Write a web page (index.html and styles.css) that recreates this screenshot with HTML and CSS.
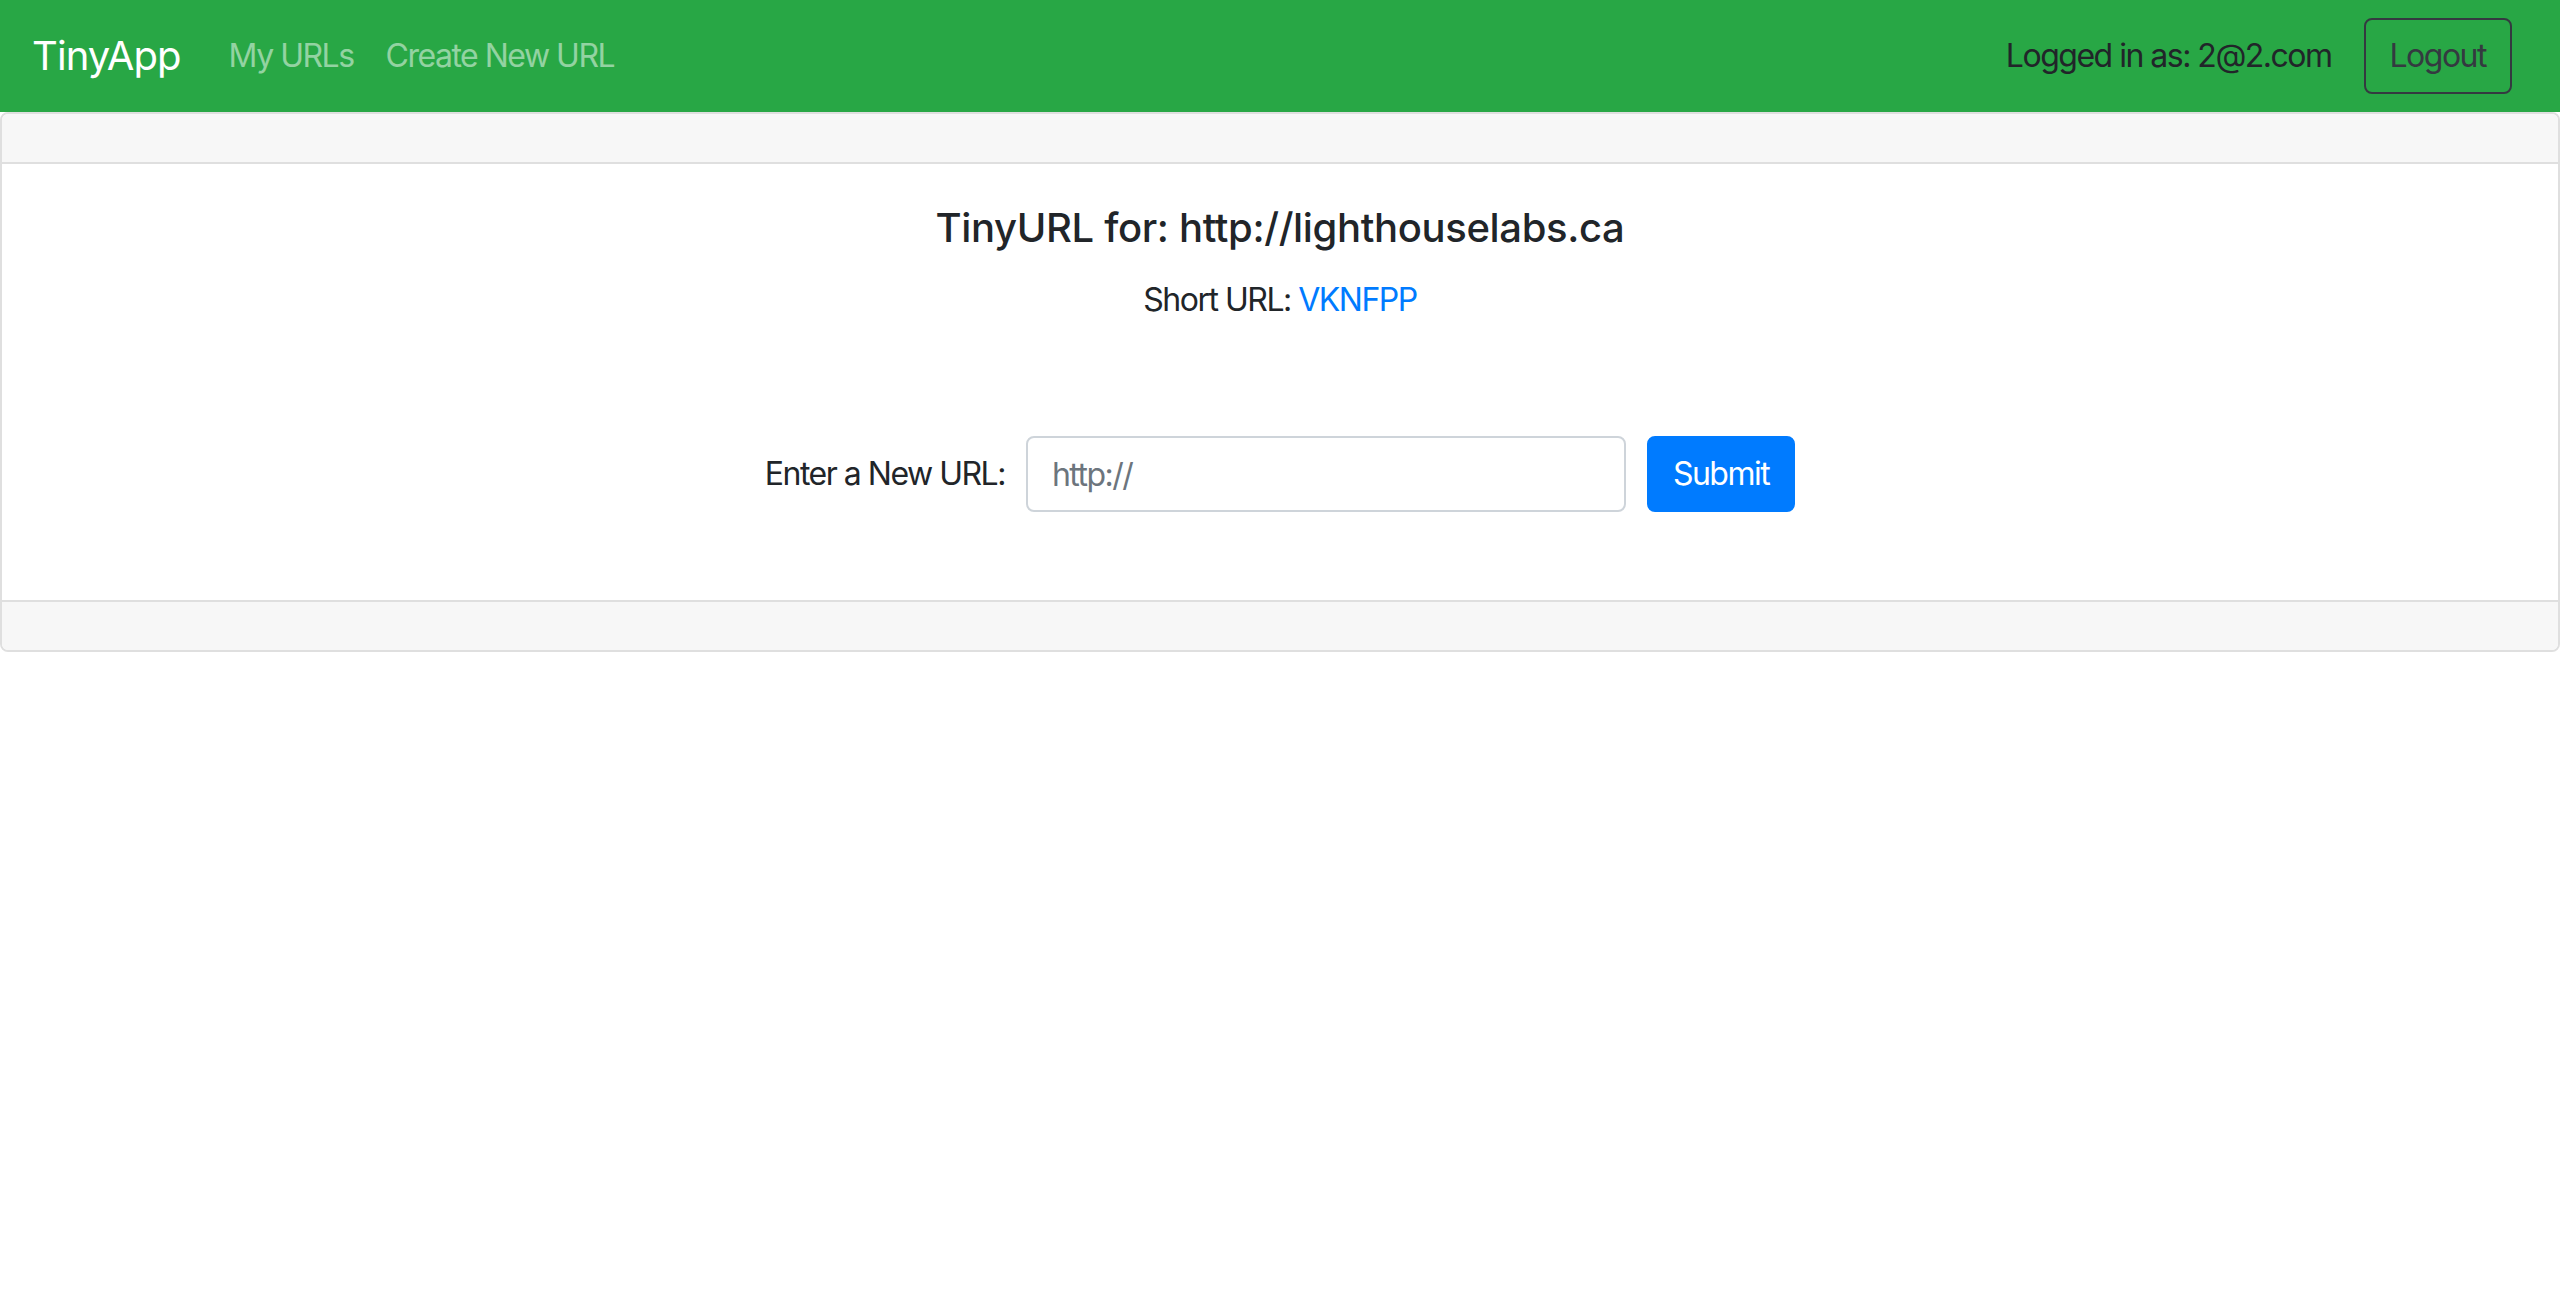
FILE: index.html
```html
<!DOCTYPE html>
<html lang="en">
<head>
<meta charset="utf-8">
<title>TinyApp</title>
<link rel="stylesheet" href="styles.css">
</head>
<body>
<nav class="navbar">
  <a class="brand" href="#">TinyApp</a>
  <div class="nav-links">
    <a class="nav-link" href="#">My URLs</a>
    <a class="nav-link" href="#">Create New URL</a>
  </div>
  <div class="nav-right">
    <span class="user">Logged in as: 2@2.com</span>
    <button class="btn-logout" type="button">Logout</button>
  </div>
</nav>
<div class="card">
  <div class="card-header"></div>
  <div class="card-body">
    <h5 class="card-title">TinyURL for: http://lighthouselabs.ca</h5>
    <p class="card-text">Short URL: <a class="short" href="#">VKNFPP</a></p>
    <form class="url-form">
      <label class="form-label" for="longURL">Enter a New URL:</label>
      <input class="form-input" id="longURL" type="text" placeholder="http://">
      <button class="btn-submit" type="button">Submit</button>
    </form>
  </div>
  <div class="card-footer"></div>
</div>
</body>
</html>
```
FILE: styles.css
```css
* { box-sizing: border-box; }
html, body { margin: 0; padding: 0; }
body {
  font-family: Inter, "Noto Sans", "Liberation Sans", sans-serif;
  font-size: 32px;
  line-height: 1.5;
  letter-spacing: -1.5px;
  color: #212529;
  background: #fff;
}
.navbar {
  display: flex;
  align-items: center;
  background: #28a745;
  padding: 16px 32px;
  height: 112px;
}
.brand {
  font-size: 40px;
  line-height: 60px;
  letter-spacing: -0.9px;
  padding: 10px 0;
  margin-right: 32px;
  color: #fff;
  text-decoration: none;
}
.nav-links { display: flex; }
.nav-link {
  padding: 16px 16px;
  color: rgba(255,255,255,.5);
  text-decoration: none;
  line-height: 48px;
}
.nav-right {
  margin-left: auto;
  display: flex;
  align-items: center;
  gap: 32px;
  margin-right: 16px;
}
.user { color: #212529; }
.btn-logout {
  font: inherit;
  font-size: 32px;
  line-height: 48px;
  letter-spacing: -1.5px;
  padding: 12px 24px;
  border: 2px solid #343a40;
  border-radius: 8px;
  color: #343a40;
  background: transparent;
}
.card {
  border: 2px solid #dfdfdf;
  border-radius: 8px;
  background: #fff;
}
.card-header {
  height: 50px;
  background: #f7f7f7;
  border-bottom: 2px solid #dfdfdf;
  border-radius: 6px 6px 0 0;
}
.card-footer {
  height: 50px;
  background: #f7f7f7;
  border-top: 2px solid #dfdfdf;
  border-radius: 0 0 6px 6px;
}
.card-body {
  padding: 40px 40px;
  text-align: center;
}
.card-title {
  margin: 0 0 24px;
  font-size: 40px;
  font-weight: 500;
  line-height: 48px;
  letter-spacing: -0.35px;
}
.card-text { margin: 0; line-height: 48px; }
.short { color: #007bff; text-decoration: none; }
.url-form {
  display: flex;
  justify-content: center;
  align-items: center;
  padding-top: 112px;
  padding-bottom: 48px;
}
.form-label { margin-right: 21px; }
.form-input {
  width: 600px;
  height: 76px;
  font: inherit;
  font-size: 32px;
  letter-spacing: -1.5px;
  padding: 12px 24px;
  border: 2px solid #ced4da;
  border-radius: 8px;
  color: #495057;
  margin-right: 21px;
}
.form-input::placeholder { color: #6c757d; }
.btn-submit {
  font: inherit;
  font-size: 32px;
  line-height: 48px;
  letter-spacing: -1.5px;
  height: 76px;
  padding: 12px 24px;
  border: 2px solid #007bff;
  border-radius: 8px;
  background: #007bff;
  color: #fff;
}
```
